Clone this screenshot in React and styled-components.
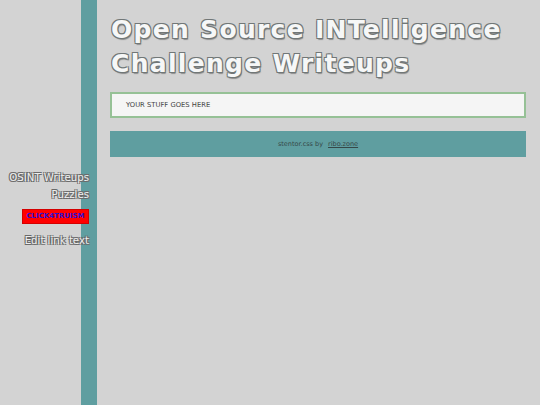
import React from "react";
import styled, { createGlobalStyle } from "styled-components";

const GlobalStyle = createGlobalStyle`
  html, body {
    margin: 0;
    padding: 0;
    background: #d3d3d3;
    font-family: "DejaVu Sans", Verdana, sans-serif;
  }
`;

const outline = (c) =>
  `-1px -1px 0 ${c}, 1px -1px 0 ${c}, -1px 1px 0 ${c}, 1px 1px 0 ${c}`;

const Page = styled.div`
  display: grid;
  grid-template-columns: 97px 1fr;
  min-height: 100vh;
`;

const Sidebar = styled.nav`
  background: linear-gradient(to right, #d3d3d3 81px, #5f9ea0 81px);
  padding: 172px 8px 0 0;
  display: flex;
  flex-direction: column;
  align-items: flex-end;
  gap: 5px;
`;

const NavLink = styled.a`
  font-size: 10.2px;
  line-height: 12px;
  color: #eeeeee;
  text-decoration: none;
  white-space: nowrap;
  text-shadow: ${outline("#6a6a6a")};
`;

const Truism = styled.a`
  display: block;
  width: 67px;
  height: 15px;
  box-sizing: border-box;
  background: #ff0000;
  border: 1px solid #d40000;
  color: #3010d0;
  font-size: 7px;
  font-weight: bold;
  line-height: 13px;
  text-align: center;
  text-decoration: none;
  margin: 3px 0 6px;
`;

const Main = styled.main`
  padding: 13px 14px 0 13px;
`;

const Title = styled.h1`
  margin: 0 0 11px 1px;
  font-size: 25px;
  line-height: 34px;
  letter-spacing: 1.3px;
  font-weight: bold;
  color: #f6f7f7;
  text-shadow: ${outline("#717777")}, 1px 2px 1px #8e8e8e;
`;

const Card = styled.section`
  height: 26px;
  box-sizing: border-box;
  display: flex;
  align-items: center;
  background: #f5f5f5;
  border: 2px solid #96c196;
  padding: 0 14px;
  font-size: 6.8px;
  color: #444;
  margin-bottom: 13px;
`;

const Footer = styled.footer`
  background: #5f9ea0;
  height: 26px;
  display: flex;
  align-items: center;
  justify-content: center;
  gap: 3px;
  font-size: 6.5px;
  color: #364848;
`;

const FooterLink = styled.a`
  color: #364848;
  text-decoration: underline;
  margin-left: 2px;
`;

export default function App() {
  return (
    <>
      <GlobalStyle />
      <Page>
        <Sidebar>
          <NavLink href="#">OSINT Writeups</NavLink>
          <NavLink href="#">Puzzles</NavLink>
          <Truism href="#">CLICK4TRUISM</Truism>
          <NavLink href="#">Edit link text</NavLink>
        </Sidebar>
        <Main>
          <Title>
            Open Source INTelligence
            <br />
            Challenge Writeups
          </Title>
          <Card>YOUR STUFF GOES HERE</Card>
          <Footer>
            stentor.css by <FooterLink href="#">ribo.zone</FooterLink>
          </Footer>
        </Main>
      </Page>
    </>
  );
}
